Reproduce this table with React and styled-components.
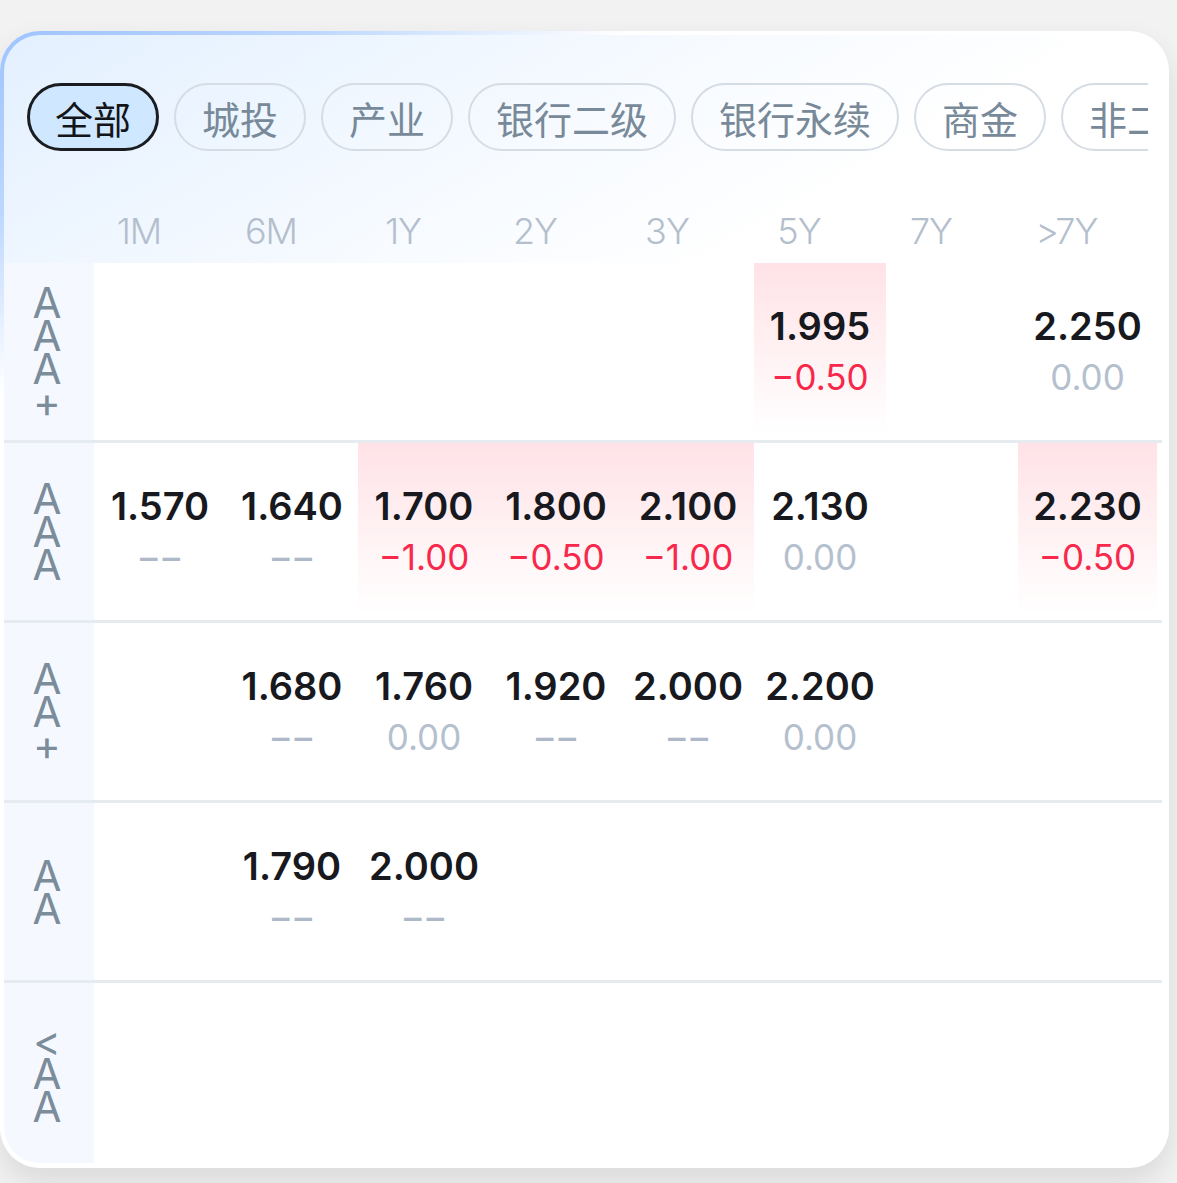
import React from 'react';
import styled, { createGlobalStyle } from 'styled-components';

const GlobalStyle = createGlobalStyle`
  html, body {
    margin: 0;
    background: #f2f2f2;
  }
  body {
    font-family: Inter, "Noto Sans CJK SC", sans-serif;
  }
`;

const Page = styled.div`
  height: 1183px;
  padding-top: 31px;
  box-sizing: border-box;
  overflow: hidden;
`;

const Card = styled.div`
  width: 1169px;
  height: 1137px;
  box-sizing: border-box;
  border: 4px solid transparent;
  border-radius: 40px;
  background:
    linear-gradient(150deg, #e3f0ff 0%, #eef6ff 13%, #f8fbff 25%, #ffffff 36%) padding-box,
    linear-gradient(150deg, #9ec3ff 0%, #bcd7ff 10%, #ffffff 20%) border-box;
  box-shadow: 0 14px 30px rgba(0, 0, 0, 0.1);
  display: flex;
  flex-direction: column;
`;

const Tabs = styled.div`
  display: flex;
  gap: 15px;
  margin: 48px 17px 0 23px;
  overflow: hidden;
  flex-shrink: 0;
`;

const Tab = styled.div`
  flex-shrink: 0;
  height: 68px;
  box-sizing: border-box;
  padding: 0 ${(p) => (p.$active ? '25px' : '26px')};
  display: flex;
  align-items: center;
  border-radius: 34px;
  border: ${(p) => (p.$active ? '3px solid #1b1c1f' : '2px solid #d5dce4')};
  background: ${(p) => (p.$active ? '#cfe7ff' : 'transparent')};
  color: ${(p) => (p.$active ? '#131417' : '#788a99')};
  font-family: "Noto Sans CJK SC", sans-serif;
  font-size: 38px;
  white-space: nowrap;
`;

const cols = '90px repeat(7, 132px) 1fr';

const Header = styled.div`
  display: grid;
  grid-template-columns: ${cols};
  height: 64px;
  margin: 48px 3px 0 0;
  padding-right: 5px;
  align-items: center;
  flex-shrink: 0;
`;

const HeadCell = styled.div`
  text-align: center;
  padding-right: 42px;
  font-size: 36px;
  font-weight: 300;
  letter-spacing: -1px;
  color: #b4bfcd;
`;

const Table = styled.div`
  margin-right: 3px;
  border-radius: 0 0 36px 36px;
  overflow: hidden;
`;

const Row = styled.div`
  display: grid;
  grid-template-columns: ${cols};
  height: 180px;
  padding-right: 5px;
  box-sizing: border-box;
  border-bottom: 3px solid #e6ebf0;
  background: #ffffff;
  &:last-child {
    border-bottom: none;
  }
`;

const Label = styled.div`
  background: #f5f9ff;
  display: flex;
  align-items: center;
  justify-content: center;
  padding-right: 4px;
`;

const LabelText = styled.span`
  width: 30px;
  word-break: break-all;
  text-align: center;
  font-size: 42px;
  line-height: 33px;
  color: #7b8c9b;
`;

const Cell = styled.div`
  display: flex;
  flex-direction: column;
  align-items: center;
  justify-content: center;
  background: ${(p) =>
    p.$hot ? 'linear-gradient(180deg, #ffe2e7 0%, #fff0f2 45%, #ffffff 97%)' : 'transparent'};
`;

const Value = styled.div`
  font-size: 38px;
  font-weight: 600;
  line-height: 51px;
  color: #17191e;
`;

const toneColor = { down: '#f7284b', flat: '#b5c0ce', none: '#adb8c8' };

const Change = styled.div`
  font-size: 35px;
  line-height: 51px;
  color: ${(p) => toneColor[p.$tone]};
  font-weight: ${(p) => (p.$tone === 'none' ? 500 : 400)};
  letter-spacing: ${(p) => (p.$tone === 'none' ? '5px' : '0')};
  margin-right: ${(p) => (p.$tone === 'none' ? '-5px' : '0')};
`;

const tabs = ['全部', '城投', '产业', '银行二级', '银行永续', '商金', '非二永'];
const terms = ['1M', '6M', '1Y', '2Y', '3Y', '5Y', '7Y', '>7Y'];

// each row: 8 cells, null = empty, [value, change]
const rows = [
  { label: 'AAA+', cells: [null, null, null, null, null, ['1.995', '−0.50'], null, ['2.250', '0.00']] },
  {
    label: 'AAA',
    cells: [
      ['1.570', '––'], ['1.640', '––'], ['1.700', '−1.00'], ['1.800', '−0.50'],
      ['2.100', '−1.00'], ['2.130', '0.00'], null, ['2.230', '−0.50'],
    ],
  },
  {
    label: 'AA+',
    cells: [null, ['1.680', '––'], ['1.760', '0.00'], ['1.920', '––'], ['2.000', '––'], ['2.200', '0.00'], null, null],
  },
  { label: 'AA', cells: [null, ['1.790', '––'], ['2.000', '––'], null, null, null, null, null] },
  { label: '<AA', cells: [null, null, null, null, null, null, null, null] },
];

const toneOf = (s) => (s.startsWith('−') ? 'down' : s === '––' ? 'none' : 'flat');

export default function App() {
  return (
    <Page>
      <GlobalStyle />
      <Card>
        <Tabs>
          {tabs.map((t, i) => (
            <Tab key={t} $active={i === 0}>{t}</Tab>
          ))}
        </Tabs>
        <Header>
          <div />
          {terms.map((t) => (
            <HeadCell key={t}>{t}</HeadCell>
          ))}
        </Header>
        <Table>
          {rows.map((r) => (
            <Row key={r.label}>
              <Label>
                <LabelText>{r.label}</LabelText>
              </Label>
              {r.cells.map((c, i) => {
                if (!c) return <Cell key={i} />;
                const tone = toneOf(c[1]);
                return (
                  <Cell key={i} $hot={tone === 'down'}>
                    <Value>{c[0]}</Value>
                    <Change $tone={tone}>{c[1]}</Change>
                  </Cell>
                );
              })}
            </Row>
          ))}
        </Table>
      </Card>
    </Page>
  );
}
